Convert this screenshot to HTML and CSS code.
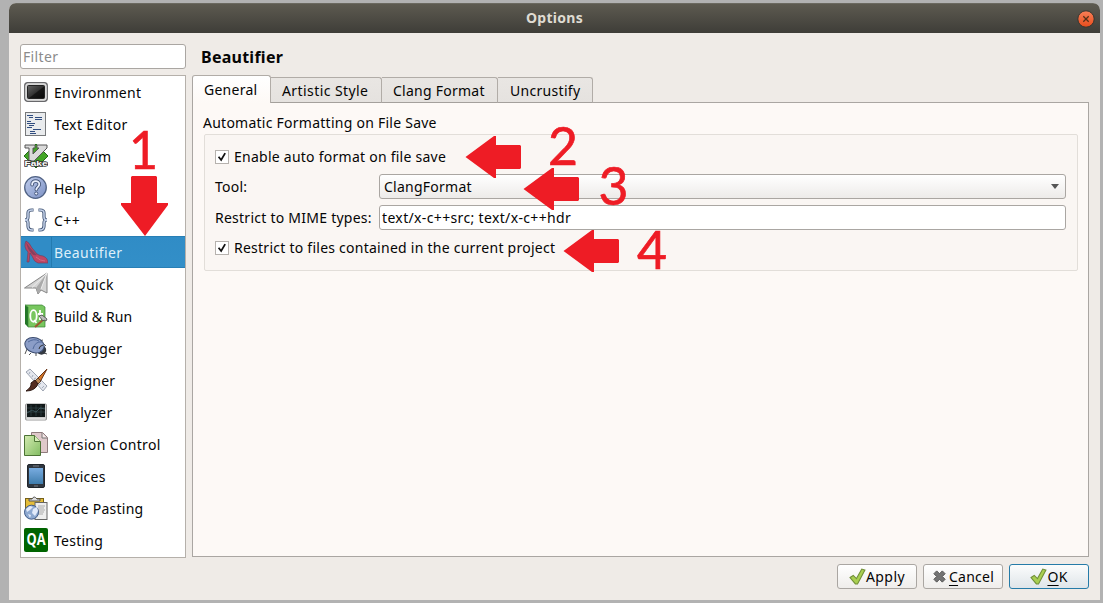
FILE: index.html
```html
<!DOCTYPE html>
<html lang="en">
<head>
<meta charset="utf-8">
<title>Options</title>
<link rel="stylesheet" href="styles.css">
</head>
<body>
<div class="window">
  <header class="titlebar"><span class="title">Options</span>
    <svg class="close" viewBox="0 0 18 18"><circle cx="9" cy="9" r="8.2" fill="url(#closeg)" stroke="#37352f"/><path d="M6.3 6.3l5.4 5.4M11.7 6.3l-5.4 5.4" stroke="#553018" stroke-width="1.3"/><defs><linearGradient id="closeg" x2="0" y2="1"><stop stop-color="#f98058"/><stop offset="1" stop-color="#e84c1c"/></linearGradient></defs></svg>
  </header>
  <div class="content">
    <aside class="sidebar">
      <div class="filter">Filter</div>
      <ul class="list">
        <li><svg viewBox="0 0 24 24"><rect x=".7" y="2.7" width="22.6" height="18.6" rx="3" fill="#c9c9c9" stroke="#68686b" stroke-width="1.3"/><rect x="2" y="4" width="20" height="16" rx="2" fill="none" stroke="#e4e4e4"/><rect x="3.5" y="5.5" width="17" height="13" rx="1" fill="url(#monitorg)" stroke="#222"/><defs><linearGradient id="monitorg" x2="1" y2="1"><stop stop-color="#666"/><stop offset=".5" stop-color="#333"/><stop offset=".55" stop-color="#161616"/><stop offset="1" stop-color="#080808"/></linearGradient></defs></svg><span class="w-env">Environment</span></li>
        <li><svg viewBox="0 0 24 24"><rect x="1.5" y=".5" width="20" height="23" fill="#e9ebed" stroke="#77797b"/><path d="M3 3.5h6M5 5.5h4M11 5.5h7M11 7.5h7M3 9.5h4M3 11.5h8M5 13.5h5M3 15.5h5M9 17.5h8M6 19.5h5M6 21.5h6" stroke="#304d80" stroke-width="1"/></svg><span class="w-text">Text Editor</span></li>
        <li><svg viewBox="0 0 24 24"><path d="M12 0l12 12-12 12L0 12z" fill="#43a526" stroke="#246b18"/><path d="M1 1h10v3H9v6l6-6h-2V1h10v3L10 17H5V4H1z" fill="#dadada" stroke="#555"/><text x=".5" y="21.5" class="fake" textLength="23" lengthAdjust="spacingAndGlyphs">Fake</text></svg><span class="w-fake">FakeVim</span></li>
        <li><svg viewBox="0 0 24 24"><circle cx="11.5" cy="11.5" r="10.8" fill="url(#helpg)" stroke="#526486" stroke-width="1.3"/><path d="M8.1 8.7c0-5 7.2-4.6 7.2-.5 0 2.7-3 3-3 5.3" fill="none" stroke="#455679" stroke-width="3.6" stroke-linecap="round"/><path d="M8.1 8.7c0-5 7.2-4.6 7.2-.5 0 2.7-3 3-3 5.3" fill="none" stroke="#e9effd" stroke-width="1.8" stroke-linecap="round"/><circle cx="12.2" cy="17.5" r="1.6" fill="#e9effd" stroke="#455679"/><defs><linearGradient id="helpg" x2="1" y2="1"><stop stop-color="#bfccec"/><stop offset="1" stop-color="#7c91c4"/></linearGradient></defs></svg><span class="w-help">Help</span></li>
        <li><svg viewBox="0 0 24 24"><path d="M9.5 2H8Q4 2 4 5v4q0 3-3 3 3 0 3 3v3q0 4 4 4h1.5M14.5 2H16q4 0 4 3v4q0 3 3 3-3 0-3 3v3q0 4-4 4h-1.5" fill="none" stroke="#405474" stroke-width="3.2"/><path d="M9 2H8Q4 2 4 5v4q0 3-3 3 3 0 3 3v3q0 4 4 4h1M15 2h1q4 0 4 3v4q0 3 3 3-3 0-3 3v3q0 4-4 4h-1" fill="none" stroke="#c5d2ea" stroke-width="1.5"/></svg><span class="w-cpp">C++</span></li>
        <li class="selected"><svg viewBox="0 0 24 24"><path d="M2 1q3 1 6 7l5 6q3 2 6 2 5 2 5 7H14q-4-1-6-7l-2-3-1 9H3l1-10Q-1 7 2 1z" fill="#bf4664" stroke="#70425f" stroke-width=".7"/><path d="M2 2q3 5 7 9l4 4q-3 1-5-1Q3 9 2 2z" fill="#87405f"/><path d="M12 17q4 4 9 4" fill="none" stroke="#d26882"/></svg><span class="w-beaut">Beautifier</span></li>
        <li><svg viewBox="0 0 24 24"><path d="M.5 16L23 1v20l-6-3-3 4-2-6z" fill="#d4d4d4" stroke="#858585" stroke-linejoin="round"/><path d="M23 1L12 16l2 6 3-5z" fill="#aaa"/><path d="M23 1L8 15.5M23 1l-6 16" stroke="#eee" fill="none"/></svg><span class="w-qt">Qt Quick</span></li>
        <li><svg viewBox="0 0 24 24"><path d="M1 1l3 2v20l-3-3z" fill="#237627"/><path d="M1 1h17l3 2v20H4V3z" fill="#78c75f" stroke="#378333" stroke-width=".7"/><ellipse cx="9.5" cy="12" rx="3.2" ry="5.8" fill="none" stroke="#fff" stroke-width="1.8"/><path d="M10 16l2.5 3M16 6v10M14 10h5" stroke="#fff" stroke-width="1.8"/><path d="M11 23l9-8" stroke="#9b5830" stroke-width="2"/><path d="M15 12l3-1 5 4-1 2-2-1-1 1z" fill="#bbb" stroke="#444" stroke-width=".8"/></svg><span class="w-build">Build &amp; Run</span></li>
        <li><svg viewBox="0 0 24 24"><path d="M3 13l-2 5M7 17l-2 2M12 17v3M20 17l3 1M15 5l4-1M20 8l2 2" fill="none" stroke="#555"/><circle cx="17.5" cy="14" r="4.7" fill="#343941"/><ellipse cx="10.5" cy="9.2" rx="9.8" ry="7.5" transform="rotate(18 10.5 9.2)" fill="#8b9dc7" stroke="#394a6e"/><path d="M4 6q6-4 11-1M9 13q2-8 9-7" fill="none" stroke="#536b9c"/><path d="M15 13q0-3 4-4" fill="none" stroke="#333"/></svg><span class="w-debug">Debugger</span></li>
        <li><svg viewBox="0 0 24 24"><path d="M2 4l4-3 17 17-4 5z" fill="#e4e7ee" stroke="#9da4b1"/><path d="M6 4l-1 2M9 7L8 9M12 10l-2 1M17 15l-2 2M20 18l-2 2" stroke="#a2abba"/><path d="M23 1L13 11l3 3z" fill="#d57725" stroke="#6a3417"/><path d="M14 10l3 3-3 3-3-3z" fill="#b88453" stroke="#60422b"/><path d="M11 12l3 4q-3 7-12 7 6-4 5-8z" fill="#542c20" stroke="#2d1813"/></svg><span class="w-design">Designer</span></li>
        <li><svg viewBox="0 0 24 24"><rect x="1.5" y="4" width="21" height="16" rx="1" fill="#ccc" stroke="#999"/><rect x="3" y="4" width="18" height="13" fill="#111819"/><path d="M7 5v11M12 5v11M17 5v11M3 8h18M3 12h18" stroke="#34474b" stroke-width=".7"/><path d="M3 13l5-3 4 2 4-4 5 1" fill="none" stroke="#47656d" stroke-width=".7"/><path d="M3 19h18" stroke="#eee"/></svg><span class="w-analyze">Analyzer</span></li>
        <li><svg viewBox="0 0 24 24"><path d="M7.5.5h11l5 5v15h-16z" fill="#dfc8ca" stroke="#8f7b7d"/><path d="M18 1v5h5" fill="#f4e7e7" stroke="#777"/><path d="M.5 3.5h10l6 6v14H.5z" fill="url(#paperg)" stroke="#4c7335"/><path d="M10.5 3.5v6h6" fill="#d6edb8" stroke="#4c7335"/><defs><linearGradient id="paperg" x2="1" y2="1"><stop stop-color="#d4ebb1"/><stop offset="1" stop-color="#82bc62"/></linearGradient></defs></svg><span class="w-version">Version Control</span></li>
        <li><svg viewBox="0 0 24 24"><rect x="3.5" y=".5" width="17" height="23" rx="1.5" fill="#303740" stroke="#20252b"/><rect x="5" y="4" width="14" height="16" fill="url(#screeng)"/><path d="M9 2h6M10 22h4" stroke="#777d83"/><defs><linearGradient id="screeng" x2="0" y2="1"><stop stop-color="#79ace0"/><stop offset="1" stop-color="#3f7dad"/></linearGradient></defs></svg><span class="w-device">Devices</span></li>
        <li><svg viewBox="0 0 24 24"><rect x="1.5" y="2.5" width="18" height="17" fill="#e5bd39" stroke="#76611a"/><path d="M5 5V3h3q2-4 5 0h3v2z" fill="#ddd" stroke="#555"/><rect x="11" y="6.5" width="12" height="17" fill="#eee" stroke="#666"/><path d="M14 10h7M14 12h6M14 14h7M14 16h6M14 18h5" stroke="#aaa"/><circle cx="7.5" cy="16.2" r="7" fill="#8ea9d0" stroke="#435d89"/><path d="M2 13l4-3 3 1-3 3-3 2zM9 13l4-2 1 4-3 5-3-3zM4 18l3 1-1 3z" fill="#e2eafa"/></svg><span class="w-code">Code Pasting</span></li>
        <li><svg viewBox="0 0 24 24"><rect width="24" height="24" rx="2" fill="#006400"/><text x="2.5" y="16.5" class="qa" textLength="19" lengthAdjust="spacingAndGlyphs">QA</text></svg><span class="w-test">Testing</span></li>
      </ul>
    </aside>
    <main class="main">
      <h1><span class="w-heading">Beautifier</span></h1>
      <nav class="tabs"><div class="tab active"><span class="w-general">General</span></div><div class="tab t2"><span class="w-art">Artistic Style</span></div><div class="tab t3"><span class="w-clang">Clang Format</span></div><div class="tab t4"><span class="w-un">Uncrustify</span></div></nav>
      <section class="panel">
        <h2><span class="w-group">Automatic Formatting on File Save</span></h2>
        <div class="group">
          <div class="check"><i class="box"><svg viewBox="0 0 14 14"><path d="M3 6.7l3 3.8 4.7-8" /></svg></i><span class="w-enable">Enable auto format on file save</span></div>
          <div class="field"><label class="w-tool">Tool:</label><div class="combo"><span class="w-combo">ClangFormat</span><i class="caret"></i></div></div>
          <div class="field mime"><label class="w-mime">Restrict to MIME types:</label><div class="input"><span class="w-input">text/x-c++src; text/x-c++hdr</span></div></div>
          <div class="check last"><i class="box"><svg viewBox="0 0 14 14"><path d="M3 6.7l3 3.8 4.7-8" /></svg></i><span class="w-restrict">Restrict to files contained in the current project</span></div>
        </div>
      </section>
    </main>
  </div>
  <footer class="buttons">
    <div class="button"><svg viewBox="0 0 16 16"><path d="M1 9l3-2 3 3 5-9 3 1-7 13H6z" fill="#a9cf51" stroke="#718f38"/></svg><span class="w-apply">Apply</span></div>
    <div class="button cancel"><svg viewBox="0 0 16 16"><path d="M2 5l3-3 3 3 3-3 3 3-3 3 3 3-3 3-3-3-3 3-3-3 3-3z" fill="#737373" stroke="#505050"/></svg><span class="w-cancel"><u>C</u>ancel</span></div>
    <div class="button ok"><svg viewBox="0 0 16 16"><path d="M1 9l3-2 3 3 5-9 3 1-7 13H6z" fill="#a9cf51" stroke="#718f38"/></svg><span class="w-ok"><u>O</u>K</span></div>
  </footer>
</div>
<svg class="annotations" viewBox="0 0 1103 603">
  <path d="M132 176h24l1 1v26h11v2l-23 31-24-31v-2h10v-26z"/>
  <path id="left" d="M465.500 157l28.500-21h2v9h24l1 1v22l-1 1h-24v9h-2z"/>
  <use href="#left" x="58" y="32"/><use href="#left" x="98" y="94"/>
  <text x="129" y="169" textLength="29" lengthAdjust="spacingAndGlyphs">1</text><text x="548" y="165" textLength="30" lengthAdjust="spacingAndGlyphs">2</text><text x="598.5" y="205" textLength="30" lengthAdjust="spacingAndGlyphs">3</text><text x="637" y="269" textLength="30" lengthAdjust="spacingAndGlyphs">4</text>
</svg>
</body>
</html>
```
FILE: styles.css
```css
* { box-sizing: border-box; }
body { margin: 0; width: 1103px; height: 603px; overflow: hidden; padding: 3px 3px 3px 9px; background: #b2b2b2; color: #050505; font: 14px/20px "Noto Sans", "Open Sans", sans-serif; }
span, label { white-space: nowrap; letter-spacing: .25px; }
.window { width: 1091px; height: 597px; background: #efebe7; border-radius: 7px 7px 0 0; overflow: hidden; }
.titlebar { height: 30px; display: grid; grid-template-columns: 1fr 18px; align-items: center; padding: 0 5px 0 23px; background: linear-gradient(#5d5a50, #3e3d38); border-top: 1px solid #6b6960; color: #dfdbd2; font-weight: 700; }
.title { justify-self: center; letter-spacing: .3px; padding-bottom: 2px; }
.close { width: 18px; height: 18px; display: block; }
.content { height: 525px; display: flex; padding: 11px 11px 0; gap: 6px; }
.sidebar { width: 166px; }
.filter { height: 25px; padding: 2px; margin-bottom: 6px; background: #fff; border: 1px solid #aaa6a2; border-radius: 3px; color: #8b8b8b; letter-spacing: .35px; }
.list { width: 166px; height: 483px; list-style: none; margin: 0; padding: 0; border: 1px solid #b5b0aa; background: #fff; }
.list li { height: 32px; display: flex; align-items: center; gap: 6px; padding-left: 3px; }
.list li > svg { width: 24px; height: 24px; flex: none; }
.list li > span { padding-top: 2px; }
.list .selected { color: #deeff9; background: linear-gradient(90deg, #308cc6 0 30px, #237bb0 30px 31px, transparent 31px), linear-gradient(#308cc6, #338fc8); box-shadow: inset 0 1px #287fb5, inset 0 -1px #287fb5; }
.list .w-text, .list .w-qt, .list .w-version { letter-spacing: .35px; }
.list .w-beaut, .list .w-cpp { letter-spacing: .42px; }
.list .w-build { letter-spacing: .1px; }
.fake { font: bold 8px "Liberation Sans", sans-serif; fill: #fff; stroke: #333; stroke-width: 1.5px; paint-order: stroke; }
.qa { font: bold 16px "Open Sans", sans-serif; fill: #fff; }
.main { width: 897px; }
h1 { margin: 0; height: 31px; padding: 3px 9px; font-size: 16px; line-height: 20px; font-weight: 700; }
.tabs { height: 28px; display: flex; align-items: flex-end; position: relative; }
.tab { height: 26px; padding: 3px 0 0 11px; border: 1px solid #b1aca7; border-left: 0; border-bottom-color: #a4a09c; background: linear-gradient(#e9e6e3, #e5e2df); border-radius: 0 3px 0 0; }
.tab.active { width: 79px; height: 28px; border-left: 1px solid #aaa6a2; border-bottom: 0; border-radius: 3px 3px 0 0; background: linear-gradient(#fff, #fdf9f6); padding-top: 4px; }
.t2 { width: 111px; } .t3 { width: 116px; } .t4 { width: 95px; padding-left: 12px; }
.w-art { letter-spacing: .42px; }
.w-un { letter-spacing: .3px; }
.panel { height: 455px; margin-top: -1px; padding: 10px 10px 0 11px; border: 1px solid #aaa6a2; background: #fdf9f6; }
h2 { font-size: 14px; font-weight: 400; line-height: 20px; margin: 0 0 1px -1px; }
.group { height: 137px; border: 1px solid #e2ded9; border-radius: 2px; background: #faf6f3; padding: 12px 11px 0 10px; }
.check { display: flex; gap: 5px; align-items: center; height: 20px; }
.box { width: 14px; height: 14px; background: #fff; border: 1px solid #b6b2ae; }
.box svg { display: block; width: 12px; height: 12px; overflow: visible; }
.box path { fill: none; stroke: #111; stroke-width: 2.1; }
.field { display: grid; grid-template-columns: 164px 1fr; align-items: center; height: 25px; margin-top: 7px; }
.field.mime { margin-top: 6px; }
.combo, .input { height: 25px; border: 1px solid #aaa6a2; border-radius: 3px; display: flex; align-items: center; }
.combo { padding: 0 6px 0 4px; justify-content: space-between; background: linear-gradient(#fff, #edebe9); }
.input { padding-left: 2px; background: #fff; }
.w-input { letter-spacing: .35px; }
.caret { border: 4px solid transparent; border-top: 5px solid #555; border-bottom: 0; }
.check.last { margin-top: 8px; }
.buttons { height: 42px; display: flex; justify-content: flex-end; gap: 6px; padding: 6px 11px 0; }
.button { width: 80px; height: 25px; display: flex; align-items: center; justify-content: center; border: 1px solid #aaa6a2; border-radius: 3px; background: linear-gradient(#fff, #efedeb); }
.button svg { width: 17px; height: 17px; }
.button.cancel { gap: 2px; }
.button.cancel svg { width: 15px; height: 15px; }
.button.ok { border-color: #257ba8; background: linear-gradient(#fbfcfc, #dfe5e9); }
.w-apply { letter-spacing: .45px; }
u { text-underline-offset: 3px; text-decoration-thickness: 1px; }
.annotations { position: absolute; left: 0; top: 0; width: 1103px; height: 603px; fill: #ee1c25; pointer-events: none; }
.annotations text { font: 53px Lato, sans-serif; stroke: #ee1c25; stroke-width: .7px; }
```
